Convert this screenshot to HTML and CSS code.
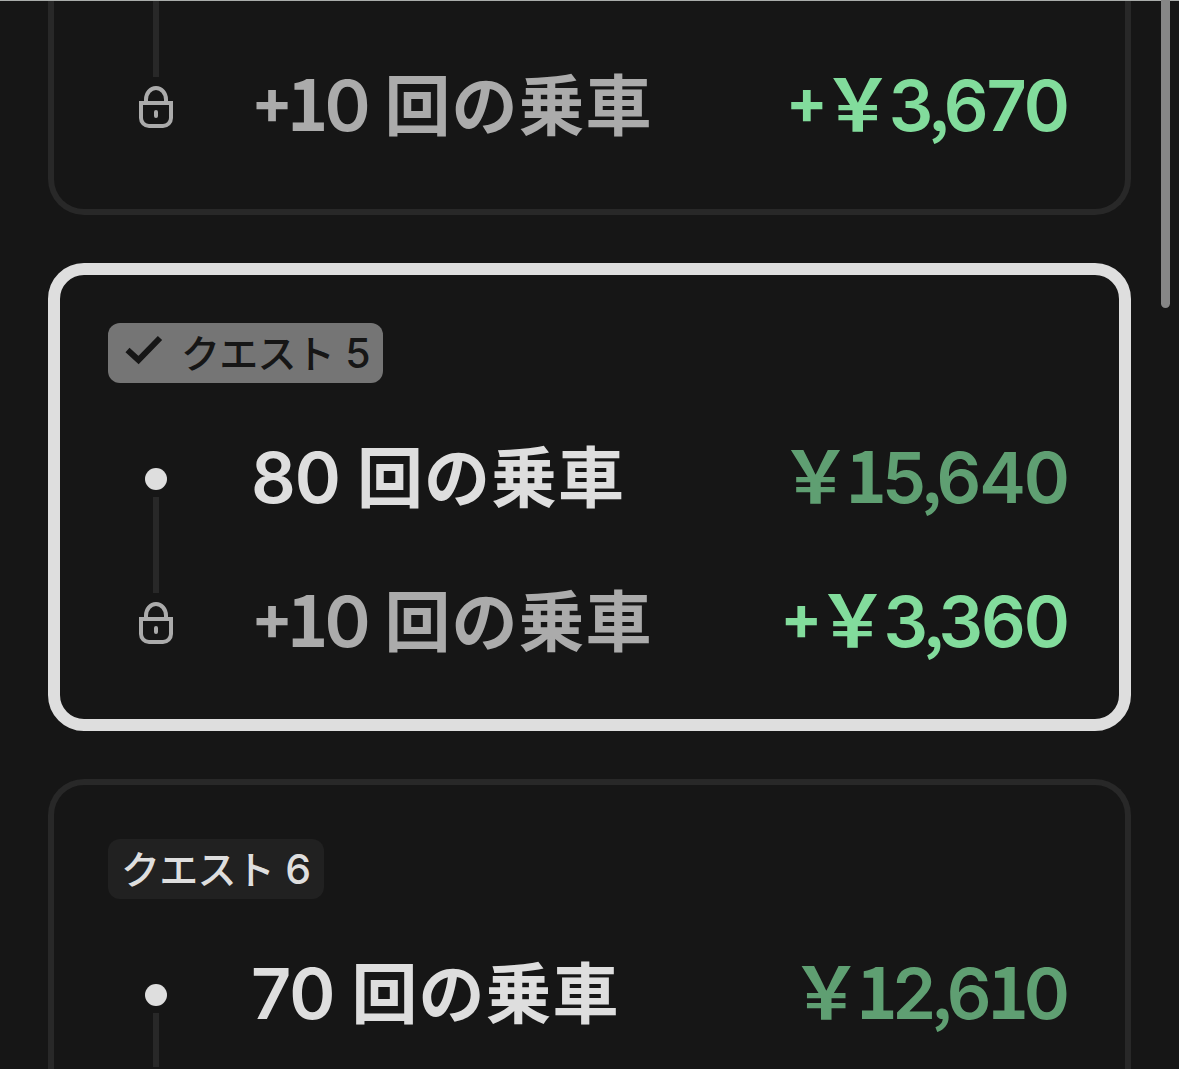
FILE: index.html
```
<!DOCTYPE html>
<html lang="ja">
<head>
  <meta charset="UTF-8">
  <title>クエスト</title>
  <link rel="stylesheet" href="styles.css">
</head>
<body>
  <main class="quest-list">
    <section class="card card-cut">
      <div class="tail"></div>
      <div class="step">
        <div class="marker marker-locked">
          <svg class="lock" viewBox="0 0 34 42"><path d="M7 17V13.5a10 11.5 0 0 1 20 0V17M2 17H32V32a8 8 0 0 1-8 8H10a8 8 0 0 1-8-8Z"/><rect x="15" y="24" width="4" height="8" rx="2"/></svg>
        </div>
        <div class="label muted"><span class="plus">+</span><span class="num"><span class="one">1</span>0</span><span class="unit">回の乗車</span></div>
        <div class="price"><span class="plus">+</span><span class="yen">￥</span><span class="amount">3<span class="comma">,</span>670</span></div>
      </div>
    </section>

    <section class="card selected">
      <div class="tag tag-selected">
        <svg class="check" viewBox="0 0 38 30"><path d="M2.5 15 13.5 25 35 3"/></svg>
        <span>クエスト</span><span class="tag-num">5</span>
      </div>
      <div class="step">
        <div class="marker marker-open"><span class="dot"></span></div>
        <div class="label"><span class="num">80</span><span class="unit">回の乗車</span></div>
        <div class="price base"><span class="yen">￥</span><span class="amount"><span class="one">1</span>5<span class="comma">,</span>640</span></div>
      </div>
      <div class="step">
        <div class="marker marker-locked">
          <svg class="lock" viewBox="0 0 34 42"><path d="M7 17V13.5a10 11.5 0 0 1 20 0V17M2 17H32V32a8 8 0 0 1-8 8H10a8 8 0 0 1-8-8Z"/><rect x="15" y="24" width="4" height="8" rx="2"/></svg>
        </div>
        <div class="label muted"><span class="plus">+</span><span class="num"><span class="one">1</span>0</span><span class="unit">回の乗車</span></div>
        <div class="price"><span class="plus">+</span><span class="yen">￥</span><span class="amount">3<span class="comma">,</span>360</span></div>
      </div>
    </section>

    <section class="card card-last">
      <div class="tag"><span>クエスト</span><span class="tag-num">6</span></div>
      <div class="step">
        <div class="marker marker-open"><span class="dot"></span></div>
        <div class="label"><span class="num">70</span><span class="unit">回の乗車</span></div>
        <div class="price base"><span class="yen">￥</span><span class="amount"><span class="one">1</span>2<span class="comma">,</span>6<span class="one">1</span>0</span></div>
      </div>
    </section>
  </main>
  <div class="top-line"></div>
  <div class="scrollbar"></div>
</body>
</html>
```
FILE: styles.css
```
* {
  box-sizing: border-box;
}
body {
  margin: 0;
  height: 100vh;
  overflow: hidden;
  background-color: #161616;
  color: #dedede;
  font-family: 'Noto Sans CJK JP', 'Noto Sans', sans-serif;
}
.quest-list {
  display: flex;
  flex-direction: column;
  gap: 48px;
  height: 100vh;
  padding: 0 48px;
}
.card {
  flex: none;
  height: 468px;
  border: 6px solid #282828;
  border-radius: 36px;
  padding: 54px 54px 30px;
}
.card.selected {
  border: 12px solid #dedede;
  padding: 48px 48px 24px;
}
.card-cut {
  height: 215px;
  border-top: 0;
  border-radius: 0 0 36px 36px;
  padding-top: 0;
}
.card.card-last {
  flex: 1;
  height: auto;
  border-bottom: 0;
  border-radius: 36px 36px 0 0;
  padding-bottom: 0;
}
.tail {
  width: 6px;
  height: 35px;
  margin-left: 45px;
  background-color: #282828;
}
.tag {
  display: flex;
  width: 216px;
  height: 60px;
  margin-bottom: 24px;
  padding-left: 13px;
  border-radius: 12px;
  background-color: #212121;
  font-size: 39px;
  font-weight: 500;
  letter-spacing: -0.7px;
  line-height: 57px;
  white-space: nowrap;
}
.tag-selected {
  width: 275px;
  padding-left: 17px;
  background-color: #757575;
  color: #161616;
}
.tag-num {
  margin-left: 11px;
  font-family: Inter, sans-serif;
  font-size: 41px;
  line-height: 60px;
}
.check {
  width: 38px;
  height: 30px;
  margin: 12px 18px 0 0;
  fill: none;
  stroke: #161616;
  stroke-width: 6;
}
.step {
  display: flex;
  height: 144px;
}
.marker {
  display: flex;
  flex-direction: column;
  align-items: center;
  width: 96px;
  margin-right: 47px;
}
.marker-open {
  padding-top: 61px;
}
.marker-open::after {
  content: "";
  width: 6px;
  height: 54px;
  margin-top: 7px;
  background-color: #282828;
}
.marker-locked::before {
  content: "";
  width: 6px;
  height: 42px;
  margin-bottom: 9px;
  background-color: #282828;
}
.dot {
  width: 22px;
  height: 22px;
  border-radius: 50%;
  background-color: #dedede;
}
.lock {
  width: 34px;
  height: 42px;
  fill: none;
  stroke: #ababab;
  stroke-width: 4;
}
.lock rect {
  fill: #ababab;
  stroke: none;
}
.label,
.price {
  display: flex;
  font-size: 70px;
  font-weight: 700;
  line-height: 142px;
  white-space: nowrap;
}
.label {
  flex: 1;
}
.muted {
  color: #ababab;
}
.num,
.amount {
  font-family: Inter, sans-serif;
  font-weight: 600;
}
.num {
  margin-right: 17px;
  letter-spacing: -1px;
}
.muted .num {
  margin-right: 15px;
}
.amount {
  margin-right: 3px;
  letter-spacing: -2px;
}
.one {
  font-family: 'Noto Sans CJK JP', sans-serif;
  font-weight: 700;
  letter-spacing: -4px;
  line-height: 1;
}
.amount .one {
  margin-left: -2px;
  letter-spacing: -5px;
}
.comma {
  margin: 0 -3px 0 -2px;
  font-family: 'Noto Sans CJK JP', sans-serif;
  font-size: 60px;
  font-weight: 700;
  line-height: 1;
}
.plus {
  margin-right: -6px;
  font-family: Inter, sans-serif;
  font-size: 62px;
  line-height: 133px;
}
.unit {
  font-size: 66px;
  letter-spacing: 1px;
  line-height: 133px;
}
.yen {
  margin-right: -5px;
  font-size: 72px;
  line-height: 130px;
}
.base .yen {
  margin-right: -4px;
}
.price {
  color: #82dc9c;
}
.price.base {
  color: #5f9f72;
}
.top-line {
  position: absolute;
  top: 0;
  left: 0;
  width: 100%;
  height: 1px;
  background-color: #aaadab;
}
.scrollbar {
  position: absolute;
  top: 0;
  right: 9px;
  width: 9px;
  height: 308px;
  border-radius: 0 0 5px 5px;
  background-color: #868686;
}
```
